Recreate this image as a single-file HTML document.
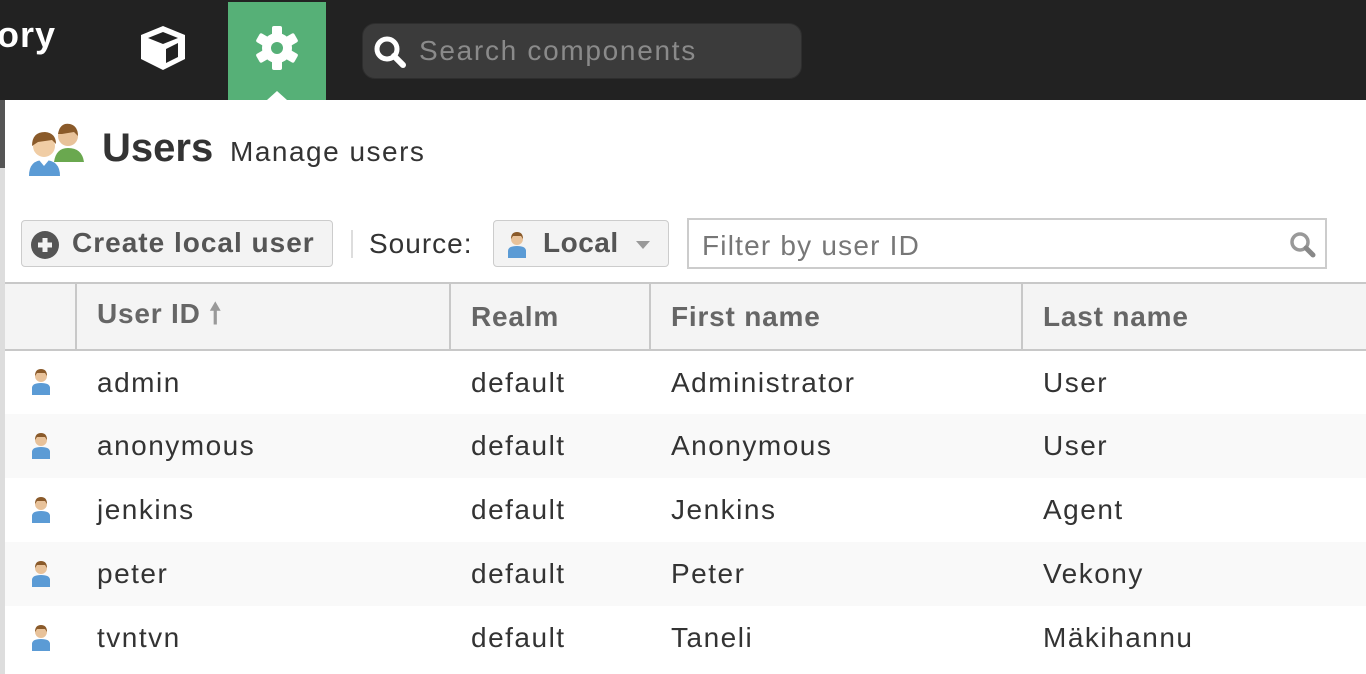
<!DOCTYPE html>
<html><head><meta charset="utf-8"><style>
*{margin:0;padding:0;box-sizing:border-box}
body{width:1366px;height:674px;overflow:hidden;background:#fff;font-family:"Liberation Sans",sans-serif;color:#333;position:relative}
.top{position:absolute;left:0;top:0;width:1366px;height:100px;background:#222}
.brand{position:absolute;left:-16px;top:14px;color:#fff;font-size:36px;font-weight:bold;letter-spacing:1px}
.tab{position:absolute;left:228px;top:2px;width:98px;height:98px;background:#56b077}
.notch{position:absolute;left:267px;top:91px;width:0;height:0;border-left:10px solid transparent;border-right:10px solid transparent;border-bottom:9px solid #fff}
.search{position:absolute;left:362px;top:23px;width:440px;height:56px;background:#3b3b3b;border:1px solid #2e2e2e;border-radius:13px}
.search span{position:absolute;left:56px;top:11px;font-size:28px;color:#8a8a8a;letter-spacing:1.7px}
.lbar{position:absolute;left:0;top:100px;width:5px;height:574px;background:#ddd}
.lbar2{position:absolute;left:0;top:100px;width:5px;height:68px;background:#555}
.h1{position:absolute;left:102px;top:126px;font-size:40px;font-weight:bold;color:#333}
.h1s{position:absolute;left:230px;top:136px;font-size:28px;color:#333;letter-spacing:1.5px}
.btn{position:absolute;left:21px;top:220px;width:312px;height:47px;border:1px solid #ccc;border-radius:4px;background:#f3f3f3}
.btn b{position:absolute;left:50px;top:6px;font-size:28px;color:#555;letter-spacing:1px}
.sep{position:absolute;left:351px;top:230px;width:2px;height:28px;background:#ddd}
.src{position:absolute;left:369px;top:228px;font-size:28px;color:#333;letter-spacing:1px}
.sel{position:absolute;left:493px;top:220px;width:176px;height:47px;border:1px solid #ccc;border-radius:4px;background:#f3f3f3}
.sel b{position:absolute;left:49px;top:6px;font-size:28px;color:#555;letter-spacing:0.5px}
.tri{position:absolute;left:142px;top:20px;border-left:7px solid transparent;border-right:7px solid transparent;border-top:8px solid #999}
.filter{position:absolute;left:687px;top:218px;width:640px;height:51px;border:2px solid #ccc;background:#fff}
.filter span{position:absolute;left:13px;top:10px;font-size:28px;color:#777;letter-spacing:1.2px}
table{position:absolute;left:5px;top:282px;border-collapse:collapse;width:1361px}
th{height:67px;background:#f4f4f4;border-top:2px solid #c8c8c8;border-bottom:2px solid #c8c8c8;border-left:2px solid #c8c8c8;text-align:left;font-size:28px;color:#666;padding-left:20px;font-weight:bold;letter-spacing:0.8px}
th:first-child{border-left:none}
td{height:64px;font-size:28px;color:#333;padding-left:21px;letter-spacing:1.5px}
tr:nth-child(odd) td{background:#f9f9f9}
tr:nth-child(even) td{background:#fff}
td.i{font-size:0}
</style></head><body>
<div class="top"></div>
<div class="brand">tory</div>
<svg style="position:absolute;left:138px;top:24px" width="50" height="48" viewBox="0 0 50 48"><path d="M25 2L47 11V35L25 46L3 35V11Z" fill="#fff"/><path d="M10 14L25 8L40 14L25 20Z" fill="#222"/><path d="M28 25L40 19V33L28 39Z" fill="#222"/></svg>
<div class="tab"></div>
<svg style="position:absolute;left:254px;top:25px" width="46" height="46" viewBox="-23 -23 46 46"><g fill="#fff"><circle r="15"/><rect x="-5" y="-22" width="10" height="44" rx="2"/><rect x="-5" y="-22" width="10" height="44" rx="2" transform="rotate(60)"/><rect x="-5" y="-22" width="10" height="44" rx="2" transform="rotate(120)"/></g><circle r="6" fill="#56b077"/></svg>
<div class="notch"></div>
<div class="search"><svg style="position:absolute;left:10px;top:11px" width="34" height="34" viewBox="0 0 34 34"><circle cx="14" cy="14" r="10" stroke="#fff" stroke-width="5" fill="none"/><path d="M21 21L30 30" stroke="#fff" stroke-width="6" stroke-linecap="round"/></svg><span>Search components</span></div>
<div class="lbar"></div><div class="lbar2"></div>
<svg style="position:absolute;left:26px;top:120px" width="62" height="62" viewBox="0 0 62 62"><circle cx="42" cy="16" r="10" fill="#e8c29a"/><path d="M32 14Q34 2 44 4Q52 6 52 16L48 12L36 14Z" fill="#8a5a2a"/><path d="M28 42Q30 28 42 28Q56 28 58 42Z" fill="#6aa84f"/><circle cx="18" cy="26" r="11" fill="#f0cda5"/><path d="M6 26Q6 12 19 12Q30 13 30 24L26 20L12 22Z" fill="#8a5a2a"/><path d="M3 56Q3 40 18 40Q34 40 34 56Z" fill="#5b9bd5"/><path d="M13 40L18 46L23 40Z" fill="#fff"/></svg>
<div class="h1">Users</div><div class="h1s">Manage users</div>
<div class="btn"><svg style="position:absolute;left:9px;top:10px" width="28" height="28" viewBox="0 0 28 28"><circle cx="14" cy="14" r="14" fill="#555"/><path d="M14 7V21M7 14H21" stroke="#f3f3f3" stroke-width="5"/></svg><b>Create local user</b></div>
<div class="sep"></div>
<div class="src">Source:</div>
<div class="sel"><svg style="position:absolute;left:13px;top:10px" width="20" height="28" viewBox="0 0 20 28"><circle cx="10" cy="8" r="6" fill="#e8c29a"/><path d="M4 8Q4 1 10 1Q16 1 16 8L14 5H6Z" fill="#8a5a2a"/><path d="M1 27V20Q1 15 10 15Q19 15 19 20V27Z" fill="#5b9bd5"/></svg><b>Local</b><div class="tri"></div></div>
<div class="filter"><span>Filter by user ID</span><svg style="position:absolute;left:600px;top:11px" width="28" height="28" viewBox="0 0 28 28"><circle cx="11" cy="11" r="8" stroke="#999" stroke-width="3.5" fill="none"/><path d="M17 17L24 24" stroke="#888" stroke-width="5" stroke-linecap="round"/></svg></div>
<table>
<tr><th style="width:71px"></th><th style="width:374px">User ID <span style="color:#999">&#129045;</span></th><th style="width:200px">Realm</th><th style="width:372px">First name</th><th>Last name</th></tr>
<tr><td class="i">U</td><td>admin</td><td>default</td><td>Administrator</td><td>User</td></tr>
<tr><td class="i">U</td><td>anonymous</td><td>default</td><td>Anonymous</td><td>User</td></tr>
<tr><td class="i">U</td><td>jenkins</td><td>default</td><td>Jenkins</td><td>Agent</td></tr>
<tr><td class="i">U</td><td>peter</td><td>default</td><td>Peter</td><td>Vekony</td></tr>
<tr><td class="i">U</td><td>tvntvn</td><td>default</td><td>Taneli</td><td>Mäkihannu</td></tr>
</table>
<div style="position:absolute;left:30px;top:0">
<svg style="position:absolute;top:368px" width="22" height="28" viewBox="0 0 20 28"><circle cx="10" cy="8" r="6" fill="#e8c29a"/><path d="M4 8Q4 1 10 1Q16 1 16 8L14 5H6Z" fill="#8a5a2a"/><path d="M1 27V20Q1 15 10 15Q19 15 19 20V27Z" fill="#5b9bd5"/></svg>
<svg style="position:absolute;top:432px" width="22" height="28" viewBox="0 0 20 28"><circle cx="10" cy="8" r="6" fill="#e8c29a"/><path d="M4 8Q4 1 10 1Q16 1 16 8L14 5H6Z" fill="#8a5a2a"/><path d="M1 27V20Q1 15 10 15Q19 15 19 20V27Z" fill="#5b9bd5"/></svg>
<svg style="position:absolute;top:496px" width="22" height="28" viewBox="0 0 20 28"><circle cx="10" cy="8" r="6" fill="#e8c29a"/><path d="M4 8Q4 1 10 1Q16 1 16 8L14 5H6Z" fill="#8a5a2a"/><path d="M1 27V20Q1 15 10 15Q19 15 19 20V27Z" fill="#5b9bd5"/></svg>
<svg style="position:absolute;top:560px" width="22" height="28" viewBox="0 0 20 28"><circle cx="10" cy="8" r="6" fill="#e8c29a"/><path d="M4 8Q4 1 10 1Q16 1 16 8L14 5H6Z" fill="#8a5a2a"/><path d="M1 27V20Q1 15 10 15Q19 15 19 20V27Z" fill="#5b9bd5"/></svg>
<svg style="position:absolute;top:624px" width="22" height="28" viewBox="0 0 20 28"><circle cx="10" cy="8" r="6" fill="#e8c29a"/><path d="M4 8Q4 1 10 1Q16 1 16 8L14 5H6Z" fill="#8a5a2a"/><path d="M1 27V20Q1 15 10 15Q19 15 19 20V27Z" fill="#5b9bd5"/></svg>
</div>
</body></html>
